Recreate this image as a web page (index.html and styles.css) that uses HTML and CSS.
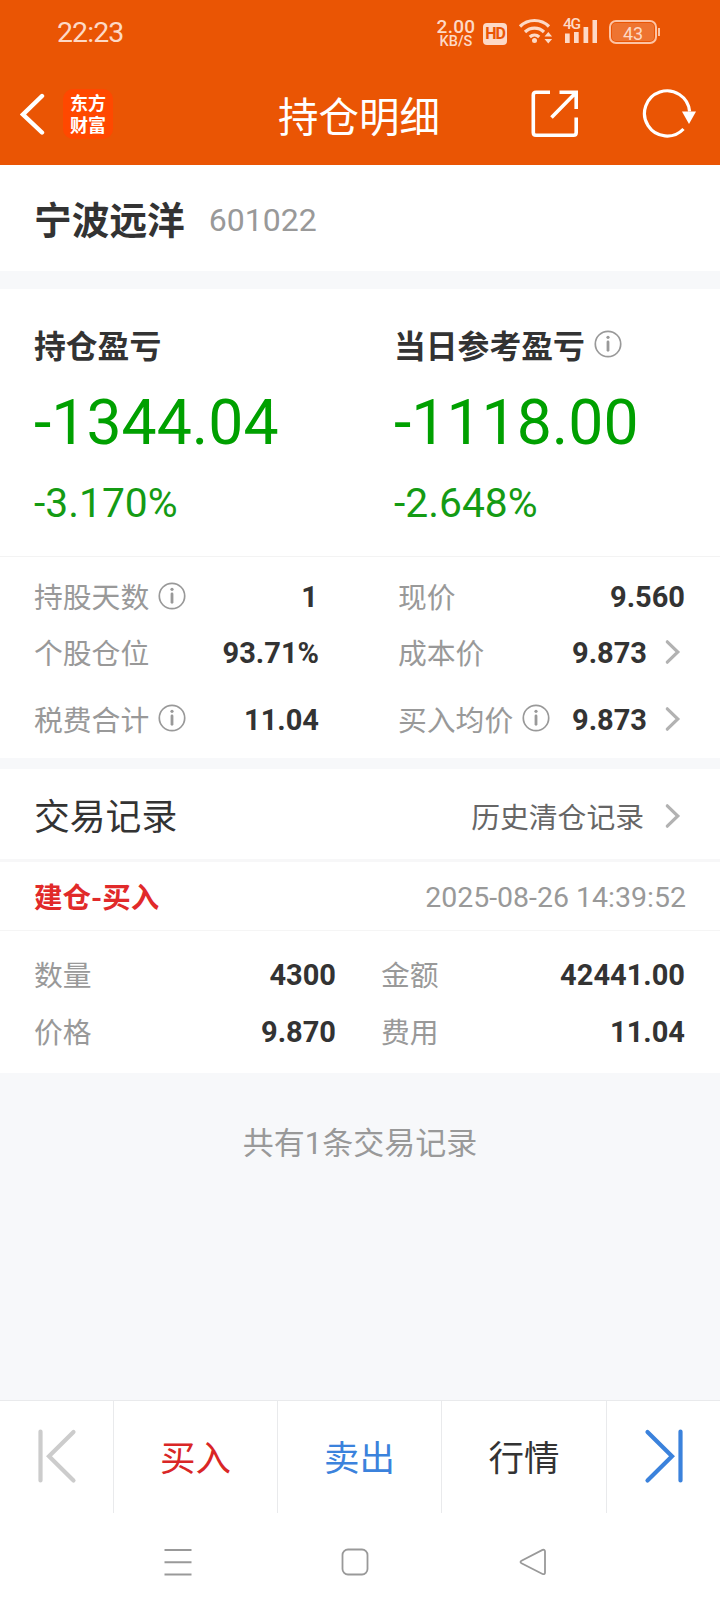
FILE: index.html
```html
<!DOCTYPE html>
<html lang="zh-CN">
<head>
<meta charset="utf-8">
<title>持仓明细</title>
<link rel="stylesheet" href="styles.css">
</head>
<body>
<svg class="defs" width="0" height="0">
  <symbol id="info" viewBox="0 0 28 28">
    <circle cx="14" cy="14" r="12.7" fill="none" stroke="#999" stroke-width="1.7"/>
    <circle cx="14" cy="7.3" r="1.6" fill="#999"/>
    <path d="M14 12v8.300" stroke="#999" stroke-width="2.8" stroke-linecap="round"/>
  </symbol>
  <symbol id="chevron" viewBox="0 0 16 26">
    <path d="M2.300 2.800 12.800 13 2.300 23.200" fill="none" stroke="#b2b2b2" stroke-width="3.200" stroke-linecap="round"/>
  </symbol>
</svg>
<header class="header">
  <div class="status">
    <span class="clock">22:23</span>
    <div class="speed"><span class="speed-num">2.00</span><span class="speed-unit">KB/S</span></div>
    <div class="hd">HD</div>
    <svg class="wifi" width="36" height="28" viewBox="0 0 36 28" fill="none" stroke="#fdd9c6" stroke-width="3.200">
      <path d="M2 8.500a20.500 20.500 0 0 1 29 0M7 14a13.500 13.500 0 0 1 19 0M11.800 19a7 7 0 0 1 9.400 0"/>
      <circle cx="16.500" cy="22.500" r="2.500" fill="#fdd9c6" stroke="none"/>
      <path d="M26.500 18.500 30.300 14l3.800 4.500zM26.500 21l3.800 4.500 3.800-4.500z" fill="#fdd9c6" stroke="none"/>
    </svg>
    <div class="signal">
      <span class="gen">4G</span>
      <svg width="34" height="26" viewBox="0 0 34 26" fill="#fdd9c6"><path d="M2 14.500h4.700V24H2zM11 13h4.700v11H11zM20.500 8h4.700v16h-4.700zM29.500 1h4.500v23h-4.500z"/></svg>
    </div>
    <div class="battery"><span>43</span></div>
  </div>
  <div class="navbar">
    <svg class="back" width="26" height="44" viewBox="0 0 26 44" fill="none" stroke="#fff" stroke-width="4.400" stroke-linecap="round"><path d="M22 4 3 22.500l19 18"/></svg>
    <div class="logo"><span>东方</span><span>财富</span></div>
    <h1 class="title">持仓明细</h1>
    <svg class="share" width="50" height="50" viewBox="0 0 50 50" fill="none" stroke="#fff" stroke-width="3.600"><path d="M20 3.300H6Q3.300 3.300 3.300 6V43.500Q3.300 46.200 6 46.200H43.500Q46.200 46.200 46.200 43.500V28.500M29.500 3.300H46.200V20M45.500 4 21.500 28.500"/></svg>
    <svg class="reload" width="56" height="50" viewBox="0 0 56 50"><path d="M42.500 40A22.600 22.600 0 1 1 48.600 22.500" fill="none" stroke="#fff" stroke-width="3.200"/><path d="M41 22.500H55L48 35z" fill="#fff"/></svg>
  </div>
</header>
<main>
  <section class="stock"><h2 class="stock-name">宁波远洋</h2><span class="stock-code">601022</span></section>
  <section class="profit">
    <div class="profit-col">
      <h3 class="profit-label">持仓盈亏</h3>
      <p class="profit-value">-1344.04</p>
      <p class="profit-rate">-3.170%</p>
    </div>
    <div class="profit-col">
      <h3 class="profit-label">当日参考盈亏<svg class="info"><use href="#info"/></svg></h3>
      <p class="profit-value">-1118.00</p>
      <p class="profit-rate">-2.648%</p>
    </div>
  </section>
  <section class="details">
    <div class="pair"><span class="label">持股天数</span><svg class="info"><use href="#info"/></svg><b class="value one">1</b></div>
    <div class="pair"><span class="label">现价</span><b class="value">9.560</b></div>
    <div class="pair"><span class="label">个股仓位</span><b class="value">93.71%</b></div>
    <div class="pair"><span class="label">成本价</span><b class="value">9.873</b><svg class="chevron"><use href="#chevron"/></svg></div>
    <div class="pair"><span class="label">税费合计</span><svg class="info"><use href="#info"/></svg><b class="value">11.04</b></div>
    <div class="pair"><span class="label">买入均价</span><svg class="info"><use href="#info"/></svg><b class="value">9.873</b><svg class="chevron"><use href="#chevron"/></svg></div>
  </section>
  <section class="records">
    <div class="records-head"><h3 class="records-title">交易记录</h3><a class="history">历史清仓记录</a><svg class="chevron"><use href="#chevron"/></svg></div>
    <div class="trade-head"><span class="trade-type">建仓-买入</span><time class="trade-time">2025-08-26 14:39:52</time></div>
    <div class="trade">
      <div class="pair"><span class="label">数量</span><b class="value">4300</b></div>
      <div class="pair"><span class="label">金额</span><b class="value">42441.00</b></div>
      <div class="pair"><span class="label">价格</span><b class="value">9.870</b></div>
      <div class="pair"><span class="label">费用</span><b class="value">11.04</b></div>
    </div>
  </section>
  <p class="summary">共有1条交易记录</p>
</main>
<nav class="tabs">
  <a class="tab"><svg width="42" height="58" viewBox="0 0 42 58" fill="none" stroke="#ccc" stroke-width="4.200" stroke-linecap="round"><path d="M4.500 4.500v49M37.500 5 13 29.200l24.500 24.300"/></svg></a>
  <a class="tab buy">买入</a>
  <a class="tab sell">卖出</a>
  <a class="tab">行情</a>
  <a class="tab"><svg width="42" height="58" viewBox="0 0 42 58" fill="none" stroke="#3b82dc" stroke-width="4.200" stroke-linecap="round"><path d="M37.500 4.500v49M4.500 5 29 29.200 4.500 53.500"/></svg></a>
</nav>
<footer class="system">
  <svg width="28" height="28" viewBox="0 0 28 28" stroke="#999" stroke-width="2"><path d="M.5 2h27M.5 14.300h27M.5 26.500h27"/></svg>
  <svg width="28" height="28" viewBox="0 0 28 28" fill="none" stroke="#999" stroke-width="1.800"><rect x="1.500" y="1.500" width="25" height="25" rx="5.500"/></svg>
  <svg width="28" height="28" viewBox="0 0 28 28" fill="none" stroke="#999" stroke-width="1.800"><path d="M2.500 12.700 23.500 1.900Q26 1.200 26 3.500V24.500Q26 26.800 23.500 26L2.500 15.300Q.5 14 2.500 12.700z"/></svg>
</footer>
</body>
</html>
```
FILE: styles.css
```css
* { box-sizing: border-box; margin: 0; padding: 0; }
body {
  width: 720px; height: 1612px; display: flex; flex-direction: column;
  background: #f7f8fa; color: #333; font-family: Roboto, "Noto Sans CJK SC", sans-serif; overflow: hidden;
}
svg { display: block; flex: none; }
.defs { position: absolute; }
h1, h2, h3 { font-weight: 400; }
.header { height: 165px; background: #ea5504; color: #fff; }
.status { height: 64px; padding: 0 63px 0 57px; display: flex; align-items: center; color: #fdd9c6; }
.clock { font-size: 28.500px; letter-spacing: -.9px; line-height: 28px; padding-top: 2px; }
.speed { margin-left: auto; width: 38px; display: flex; flex-direction: column; align-items: center; font-weight: 500; padding-top: 4px; }
.speed-num { font-size: 19px; line-height: 16px; letter-spacing: .3px; }
.speed-unit { font-size: 14.500px; line-height: 14px; }
.hd { width: 24px; height: 22px; margin: 3px 0 0 8px; border-radius: 4px; background: #fdd9c6; color: #ea5504; font-size: 16px; line-height: 22px; font-weight: 700; letter-spacing: -1px; text-align: center; }
.wifi { margin-left: 11px; }
.signal { position: relative; margin-left: 9px; width: 34px; height: 26px; }
.gen { position: absolute; left: 0; top: -3px; font-size: 15.500px; line-height: 16px; font-weight: 500; letter-spacing: -1.200px; }
.battery { position: relative; width: 48px; height: 24px; margin-left: 12px; border: 2px solid #fdc3a4; border-radius: 7px; background: #ee7431; background-clip: content-box; padding: 1px; text-align: center; font-size: 18px; line-height: 21px; }
.battery::after { content: ""; position: absolute; right: -5px; top: 6px; width: 2px; height: 8px; background: #fdc3a4; }
.navbar { height: 100px; display: flex; align-items: center; padding: 0 23px 0 20px; }
.logo { width: 50px; height: 50px; margin-left: 17px; border-radius: 10px; background: #ff4800; display: flex; flex-direction: column; align-items: center; justify-content: center; font-family: "Noto Sans CJK SC", sans-serif; font-weight: 700; font-size: 18px; line-height: 22px; padding-bottom: 2px; }
.title { margin: 7px 0 0 165px; font-size: 40.500px; line-height: 48px; }
.share { margin-left: 90px; }
.reload { margin-left: auto; }
.stock { height: 106px; padding: 0 34px; background: #fff; display: flex; align-items: center; }
.stock-name { font-size: 37.700px; font-weight: 700; padding-bottom: 2px; }
.stock-code { margin-left: 24px; font-size: 32px; color: #999; padding-top: 3px; }
.profit { height: 268px; margin-top: 18px; padding: 32px 34px 0; background: #fff; border-bottom: 1px solid #f3f3f3; display: grid; grid-template-columns: 360px 1fr; }
.profit-label { height: 46px; display: flex; align-items: center; font-size: 31.800px; font-weight: 700; }
.info { width: 28px; height: 28px; margin: -3px 0 0 9px; }
.profit-label .info { margin-top: 0; }
.profit-value { color: #00a000; font-size: 62.500px; line-height: 74px; margin-top: 19px; }
.profit-rate { color: #149b14; font-size: 40.800px; line-height: 48px; margin-top: 19px; }
.details { height: 201px; padding: 12px 35px 0; background: #fff; display: grid; grid-template-columns: 284px 286px; column-gap: 80px; grid-template-rows: 56px 56px 77px; }
.pair { display: flex; align-items: center; font-size: 29px; }
.label { color: #999; font-size: 28.800px; margin-left: -1px; padding-bottom: 3px; }
.value { margin-left: auto; color: #333; font-weight: 700; }
.one { margin-right: 1px; }
.chevron { width: 16px; height: 26px; margin: -2px 4px 0 18px; }
.records { margin-top: 11px; background: #fff; }
.records-head { height: 93px; padding: 0 34px; border-bottom: 3px solid #f7f7f8; display: flex; align-items: center; }
.records-title { font-size: 35.800px; }
.history { margin-left: auto; color: #666; font-size: 28.800px; padding-top: 2px; }
.records-head .chevron { margin: 3px 5px 0 21px; }
.trade-head { height: 69px; padding: 0 34px; border-bottom: 1px solid #f5f5f5; display: flex; align-items: center; justify-content: space-between; }
.trade-type { color: #e12a2a; font-weight: 700; font-size: 28.500px; padding-bottom: 1px; }
.trade-time { color: #999; font-size: 28.500px; padding-top: 2px; }
.trade { height: 142px; padding: 15px 35px 0; display: grid; grid-template-columns: 301px 303px; column-gap: 46px; grid-template-rows: 57px 57px; }
.summary { margin-top: 53px; text-align: center; font-size: 31px; line-height: 36px; color: #999; }
main { flex: 1; }
.tabs { height: 113px; background: #fff; border-top: 1px solid #e9eaec; display: grid; grid-template-columns: 114px 164px 164px 165px 113px; }
.tab { display: flex; align-items: center; justify-content: center; border-right: 1px solid #e9eaec; font-size: 35.500px; color: #333; padding-bottom: 3px; }
.tab:last-child { border-right: 0; }
.buy { color: #d92626; }
.sell { color: #3b82dc; }
.system { height: 99px; background: #fff; display: flex; align-items: center; justify-content: center; gap: 149.500px; padding: 0 10px 1px 0; }
```
